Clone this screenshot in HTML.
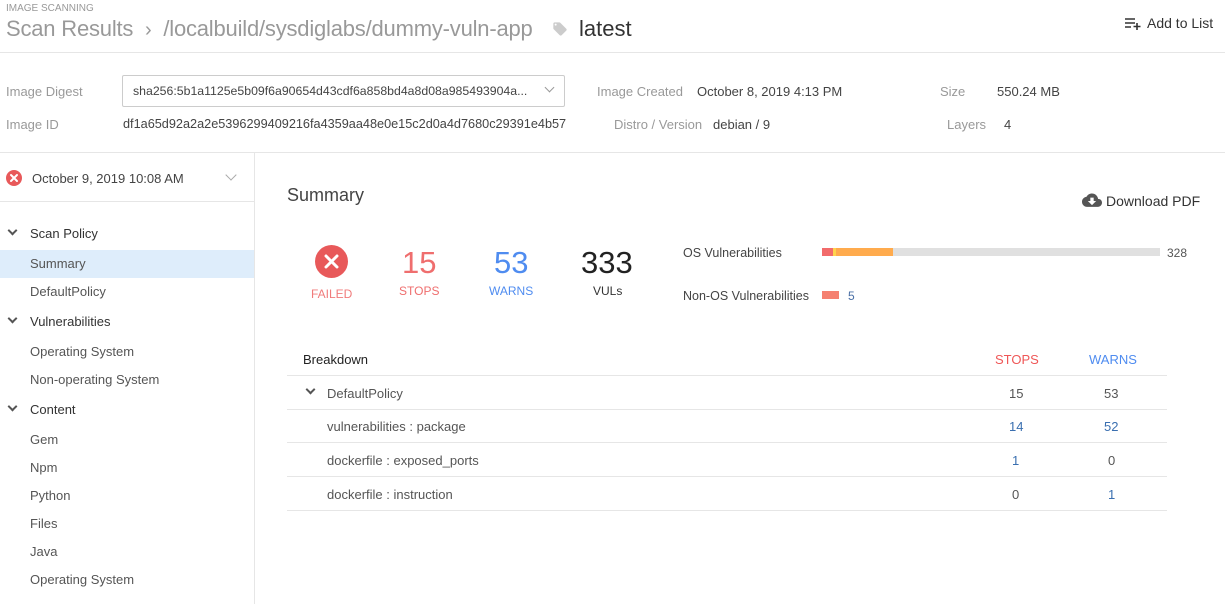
<!DOCTYPE html>
<html><head><meta charset="utf-8"><style>
*{box-sizing:border-box;margin:0;padding:0}
body{width:1225px;height:604px;overflow:hidden;background:#fff;font-family:"Liberation Sans",sans-serif;color:#333;position:relative}
.a{position:absolute;white-space:nowrap}
.lbl{color:#999;font-size:13px}
.val{color:#444;font-size:13px}
.nav{position:absolute;left:0;width:254px;height:28px;line-height:28px;font-size:13px;color:#555;padding-left:30px}
.sec{color:#333}
.chev{position:absolute;left:9px;top:7px;width:7px;height:7px;border-right:2px solid #555;border-bottom:2px solid #555;transform:rotate(45deg)}
.row{position:absolute;left:287px;width:880px;height:34px;border-bottom:1px solid #e6e6e6;font-size:13px;color:#555}
.row span{position:absolute;top:10px}
</style></head><body>
<div class="a" style="left:6px;top:3px;font-size:10px;color:#999">IMAGE SCANNING</div>
<div class="a" style="left:6px;top:16px;font-size:22px;color:#999;letter-spacing:-0.2px">Scan Results &nbsp;<span style="font-size:20px">›</span>&nbsp; /localbuild/sysdiglabs/dummy-vuln-app</div>
<svg class="a" style="left:552px;top:21px" width="16" height="16" viewBox="0 0 24 24"><path fill="#ccc" d="M21.4 11.6l-9-9C12.1 2.2 11.6 2 11 2H4c-1.1 0-2 .9-2 2v7c0 .6.2 1.1.6 1.4l9 9c.4.4.9.6 1.4.6s1-.2 1.4-.6l7-7c.4-.4.6-.9.6-1.4s-.2-1.1-.6-1.4zM5.5 7C4.7 7 4 6.3 4 5.5S4.7 4 5.5 4 7 4.7 7 5.5 6.3 7 5.5 7z"/></svg>
<div class="a" style="left:579px;top:16px;font-size:22px;color:#333">latest</div>
<svg class="a" style="left:1124px;top:15px" width="18" height="16" viewBox="0 0 18 16"><path stroke="#333" stroke-width="1.6" d="M1 4h10M1 8h10M1 12h6M13 8v7M9.5 11.5h7"/></svg>
<div class="a" style="left:1147px;top:15px;font-size:14px;color:#333">Add to List</div>
<div class="a" style="left:0;top:52px;width:1225px;border-top:1px solid #e6e6e6"></div>

<div class="a lbl" style="left:6px;top:84px">Image Digest</div>
<div class="a" style="left:122px;top:75px;width:443px;height:32px;border:1px solid #ccc;border-radius:2px;font-size:12.3px;color:#444;padding:8px 10px;overflow:hidden">sha256:5b1a1125e5b09f6a90654d43cdf6a858bd4a8d08a985493904a...</div>
<div class="a" style="left:546px;top:84px;width:7px;height:7px;border-right:1.5px solid #999;border-bottom:1.5px solid #999;transform:rotate(45deg)"></div>
<div class="a lbl" style="left:6px;top:117px">Image ID</div>
<div class="a val" style="left:123px;top:117px;font-size:12.7px">df1a65d92a2a2e5396299409216fa4359aa48e0e15c2d0a4d7680c29391e4b57</div>
<div class="a lbl" style="left:597px;top:84px">Image Created</div>
<div class="a val" style="left:697px;top:84px">October 8, 2019 4:13 PM</div>
<div class="a lbl" style="left:614px;top:117px">Distro / Version</div>
<div class="a val" style="left:713px;top:117px">debian / 9</div>
<div class="a lbl" style="left:940px;top:84px">Size</div>
<div class="a val" style="left:997px;top:84px">550.24 MB</div>
<div class="a lbl" style="left:947px;top:117px">Layers</div>
<div class="a val" style="left:1004px;top:117px">4</div>
<div class="a" style="left:0;top:152px;width:1225px;border-top:1px solid #e6e6e6"></div>

<div class="a" style="left:254px;top:152px;height:452px;border-left:1px solid #e6e6e6"></div>
<div class="a" style="left:6px;top:170px;width:16px;height:16px;border-radius:50%;background:#e8595a"></div>
<svg class="a" style="left:6px;top:170px" width="16" height="16"><path d="M5 5l6 6M11 5l-6 6" stroke="#fff" stroke-width="2" stroke-linecap="round"/></svg>
<div class="a val" style="left:32px;top:171px;color:#444">October 9, 2019 10:08 AM</div>
<div class="a" style="left:227px;top:171px;width:8px;height:8px;border-right:1.5px solid #aaa;border-bottom:1.5px solid #aaa;transform:rotate(45deg)"></div>
<div class="a" style="left:0;top:201px;width:254px;border-top:1px solid #e6e6e6"></div>

<div class="nav sec" style="top:220px"><i class="chev"></i>Scan Policy</div>
<div class="nav" style="top:250px;background:#deedfb">Summary</div>
<div class="nav" style="top:278px">DefaultPolicy</div>
<div class="nav sec" style="top:308px"><i class="chev"></i>Vulnerabilities</div>
<div class="nav" style="top:338px">Operating System</div>
<div class="nav" style="top:366px">Non-operating System</div>
<div class="nav sec" style="top:396px"><i class="chev"></i>Content</div>
<div class="nav" style="top:426px">Gem</div>
<div class="nav" style="top:454px">Npm</div>
<div class="nav" style="top:482px">Python</div>
<div class="nav" style="top:510px">Files</div>
<div class="nav" style="top:538px">Java</div>
<div class="nav" style="top:566px">Operating System</div>

<div class="a" style="left:287px;top:185px;font-size:18px;color:#444">Summary</div>
<svg class="a" style="left:1082px;top:193px" width="20" height="16" viewBox="0 0 24 18"><path fill="#555" d="M19.4 6.6C18.7 2.8 15.7 0 12 0 9.1 0 6.6 1.6 5.3 4.1 2.3 4.4 0 6.9 0 10c0 3.3 2.7 6 6 6h13c2.8 0 5-2.2 5-5 0-2.6-2-4.8-4.6-4.4zM17 9l-5 5-5-5h3V5h4v4h3z"/></svg>
<div class="a" style="left:1106px;top:193px;font-size:14px;color:#333">Download PDF</div>

<div class="a" style="left:315px;top:245px;width:33px;height:33px;border-radius:50%;background:#e8595a"></div>
<svg class="a" style="left:315px;top:245px" width="33" height="33"><path d="M11 11l11 11M22 11l-11 11" stroke="#fff" stroke-width="3" stroke-linecap="round"/></svg>
<div class="a" style="left:311px;top:287px;font-size:12px;color:#f07b7b">FAILED</div>
<div class="a" style="left:402px;top:245px;font-size:31px;color:#ef6e6e">15</div>
<div class="a" style="left:399px;top:284px;font-size:12px;color:#ef6e6e">STOPS</div>
<div class="a" style="left:494px;top:245px;font-size:31px;color:#4f8cf0">53</div>
<div class="a" style="left:489px;top:284px;font-size:12px;color:#4f8cf0">WARNS</div>
<div class="a" style="left:581px;top:245px;font-size:31px;color:#222">333</div>
<div class="a" style="left:593px;top:284px;font-size:12px;color:#333">VULs</div>

<div class="a" style="left:683px;top:246px;font-size:12.5px;color:#444">OS Vulnerabilities</div>
<div class="a" style="left:822px;top:248px;width:338px;height:8px;background:#e0e0e0"></div>
<div class="a" style="left:822px;top:248px;width:11px;height:8px;background:#f26b6b"></div>
<div class="a" style="left:833px;top:248px;width:3px;height:8px;background:#ffd34d"></div>
<div class="a" style="left:836px;top:248px;width:57px;height:8px;background:#ffab4d"></div>
<div class="a" style="left:1167px;top:246px;font-size:12px;color:#555">328</div>
<div class="a" style="left:683px;top:289px;font-size:12.5px;color:#444">Non-OS Vulnerabilities</div>
<div class="a" style="left:822px;top:291px;width:17px;height:8px;background:#f58070"></div>
<div class="a" style="left:848px;top:289px;font-size:12px;color:#4a6fa5">5</div>

<div class="row" style="top:342px"><span style="left:16px;color:#222">Breakdown</span><span style="left:708px;color:#ef5757">STOPS</span><span style="left:802px;color:#4f8cf0">WARNS</span></div>
<div class="row" style="top:376px"><i class="chev" style="left:20px;top:10px;border-color:#555"></i><span style="left:40px">DefaultPolicy</span><span style="left:722px">15</span><span style="left:817px">53</span></div>
<div class="row" style="top:409px"><span style="left:40px">vulnerabilities : package</span><span style="left:722px;color:#3a6fb0">14</span><span style="left:817px;color:#3a6fb0">52</span></div>
<div class="row" style="top:443px"><span style="left:40px">dockerfile : exposed_ports</span><span style="left:725px;color:#3a6fb0">1</span><span style="left:821px">0</span></div>
<div class="row" style="top:477px"><span style="left:40px">dockerfile : instruction</span><span style="left:725px">0</span><span style="left:821px;color:#3a6fb0">1</span></div>
</body></html>
